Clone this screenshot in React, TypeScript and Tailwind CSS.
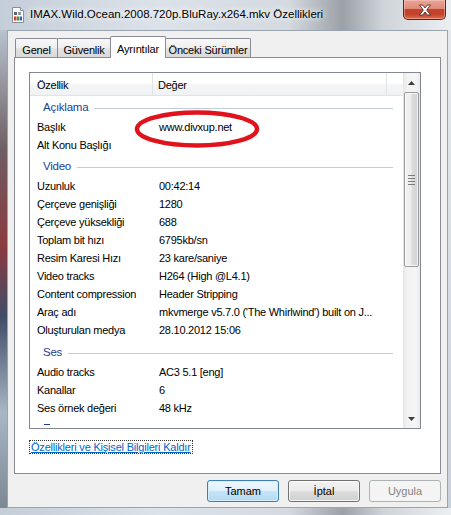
import React from "react";

type Row = { k: string; v: string };
type Group = { title: string; rows: Row[]; h: string };

const groups: Group[] = [
  {
    title: "Açıklama",
    h: "h-[22px] pt-[2px]",
    rows: [
      { k: "Başlık", v: "www.divxup.net" },
      { k: "Alt Konu Başlığı", v: "" },
    ],
  },
  {
    title: "Video",
    h: "h-[23px] pt-[3px]",
    rows: [
      { k: "Uzunluk", v: "00:42:14" },
      { k: "Çerçeve genişliği", v: "1280" },
      { k: "Çerçeve yüksekliği", v: "688" },
      { k: "Toplam bit hızı", v: "6795kb/sn" },
      { k: "Resim Karesi Hızı", v: "23 kare/saniye" },
      { k: "Video tracks", v: "H264 (High @L4.1)" },
      { k: "Content compression", v: "Header Stripping" },
      { k: "Araç adı", v: "mkvmerge v5.7.0 ('The Whirlwind') built on J..." },
      { k: "Oluşturulan medya", v: "28.10.2012 15:06" },
    ],
  },
  {
    title: "Ses",
    h: "h-[24px] pt-[4px]",
    rows: [
      { k: "Audio tracks", v: "AC3 5.1 [eng]" },
      { k: "Kanallar", v: "6" },
      { k: "Ses örnek değeri", v: "48 kHz" },
    ],
  },
];

function FileIcon() {
  return (
    <svg width="14" height="16" viewBox="0 0 14 16">
      <path d="M1.5 0.5h8l3 3v12h-11z" fill="#fbfbfb" stroke="#8a8f96" />
      <path d="M9.5 0.5v3h3" fill="#e4e6e9" stroke="#8a8f96" />
      <rect x="3" y="5" width="3" height="3" fill="#5b6470" />
      <rect x="7" y="5" width="3" height="3" fill="#8d96a3" />
      <rect x="3" y="9.5" width="2.5" height="4" fill="#d63a2a" />
      <rect x="6" y="9.5" width="2.5" height="4" fill="#3b9a3b" />
      <rect x="9" y="9.5" width="2" height="4" fill="#3a62c4" />
    </svg>
  );
}

function Tab({ label, w, selected }: { label: string; w: string; selected?: boolean }) {
  if (selected) {
    return (
      <div
        className={`${w} h-[22px] -mb-px -ml-px relative z-10 bg-white border border-b-0 border-[#898c95] rounded-t-[2px] flex justify-center pt-[4px] text-[11px] tracking-[-0.2px] text-black`}
      >
        {label}
      </div>
    );
  }
  return (
    <div
      className={`${w} h-[19px] -ml-px first:ml-0 border border-b-0 border-[#898c95] rounded-t-[2px] bg-[linear-gradient(180deg,#f8f8f8_0%,#eeeeee_50%,#e3e3e3_51%,#d9d9d9_100%)] flex justify-center pt-[3px] text-[11px] tracking-[-0.2px] text-black`}
    >
      {label}
    </div>
  );
}

export default function App() {
  return (
    <div className="relative w-[451px] h-[515px] overflow-hidden flex flex-col font-['Liberation_Sans',Arial,sans-serif] bg-[linear-gradient(90deg,#c4ced9_0%,#dce2e9_35%,#d4dae0_64%,#9ba1a7_76%,#cfd4d9_85%,#eceff2_100%)]">
      {/* title bar */}
      <div className="h-[30px] flex shrink-0">
        <div className="flex items-center h-[30px] pl-[11px] pb-[1px]">
          <FileIcon />
          <span className="ml-[5px] text-[11.5px] text-black [text-shadow:0_0_6px_#ffffff,0_0_10px_#ffffff]">
            IMAX.Wild.Ocean.2008.720p.BluRay.x264.mkv Özellikleri
          </span>
        </div>
        <div className="ml-auto mr-[5px] w-[43px] h-[20px] rounded-b-[5px] border border-t-0 border-[#5e2319] bg-[linear-gradient(180deg,#eaa596_0%,#de8a78_45%,#c8412b_50%,#c2432c_75%,#dc6e50_100%)] shadow-[inset_0_0_0_1px_rgba(255,210,200,0.45)] flex items-center justify-center">
          <svg width="14" height="12" viewBox="0 0 14 12">
            <path
              d="M1.5 1h3.2L7 4l2.3-3h3.2L8.7 6l3.8 5H9.3L7 8 4.7 11H1.5l3.8-5z"
              fill="#ffffff"
              stroke="#5a2a22"
              strokeWidth="0.9"
              strokeLinejoin="round"
            />
          </svg>
        </div>
      </div>

      {/* body */}
      <div className="flex h-[478px] shrink-0">
        <div className="w-[7px] bg-[linear-gradient(180deg,#b8c3ce_0%,#6d5e63_25%,#8b3b40_45%,#3f4c66_60%,#a9b6c4_80%,#7c8894_100%)]" />
        <div className="w-[441px] h-[478px] bg-[#f0f0f0] border border-[#9aa4ae] flex flex-col pl-[6px]">
          {/* tabs */}
          <div className="h-[26px] flex items-end pl-[1px] shrink-0">
            <Tab label="Genel" w="w-[43px]" />
            <Tab label="Güvenlik" w="w-[54px]" />
            <Tab label="Ayrıntılar" w="w-[56px]" selected />
            <Tab label="Önceki Sürümler" w="w-[86px]" />
          </div>

          {/* panel */}
          <div className="w-[427px] h-[417px] bg-white border border-[#898c95] pt-[14px] pl-[14px] shrink-0">
            <div className="w-[392px] h-[357px] border border-[#828790] flex bg-white">
              <div className="flex-1 overflow-hidden flex flex-col text-[11px] tracking-[-0.25px] text-black">
                {/* header */}
                <div className="h-[23px] shrink-0 flex border-b border-[#e2e3e5] bg-[linear-gradient(180deg,#ffffff_0%,#ffffff_45%,#f4f5f6_55%,#f1f2f4_100%)]">
                  <div className="w-[123px] pl-[7px] pt-[2px] flex items-center border-r border-[#e3e4e6]">Özellik</div>
                  <div className="w-[234px] pl-[5px] pt-[2px] flex items-center border-r border-[#e3e4e6]">Değer</div>
                  <div className="flex-1" />
                </div>
                {groups.map((g) => (
                  <div key={g.title} className="shrink-0">
                    <div className={`${g.h} w-[363px] flex items-center pl-[13px]`}>
                      <span className="text-[#1f3d93] text-[11.5px]">{g.title}</span>
                      <div className="flex-1 ml-[6px] h-px bg-[#c3cbdb]" />
                    </div>
                    {g.rows.map((r) => (
                      <div key={r.k} className="h-[18px] flex items-center">
                        <div className="w-[123px] pl-[7px] whitespace-nowrap">{r.k}</div>
                        <div className="pl-[6px] whitespace-nowrap">{r.v}</div>
                      </div>
                    ))}
                  </div>
                ))}
                <div className="mt-[7px] ml-[14px] w-[6px] h-px bg-[#1f3d93] shrink-0" />
              </div>
              {/* scrollbar */}
              <div className="w-[17px] shrink-0 flex flex-col bg-[linear-gradient(90deg,#e6e6e6_0%,#f3f3f3_25%,#f5f5f5_75%,#ebebeb_100%)]">
                <div className="h-[19px] flex items-center justify-center">
                  <svg width="7" height="4" viewBox="0 0 7 4">
                    <path d="M3.5 0L7 4H0z" fill="#3d3d3d" />
                  </svg>
                </div>
                <div className="h-[175px] mx-px rounded-[2px] border border-[#9a9a9a] bg-[linear-gradient(90deg,#f5f5f5_0%,#ececec_45%,#dcdcdc_55%,#d2d2d2_100%)] shadow-[inset_0_0_0_1px_rgba(255,255,255,0.7)] flex flex-col items-center justify-center gap-[2px]">
                  <div className="w-[7px] h-px bg-[#7d7d7d]" />
                  <div className="w-[7px] h-px bg-[#7d7d7d]" />
                  <div className="w-[7px] h-px bg-[#7d7d7d]" />
                  <div className="w-[7px] h-px bg-[#7d7d7d]" />
                </div>
                <div className="flex-1" />
                <div className="h-[19px] flex items-center justify-center">
                  <svg width="7" height="4" viewBox="0 0 7 4">
                    <path d="M0 0h7L3.5 4z" fill="#3d3d3d" />
                  </svg>
                </div>
              </div>
            </div>
            <div className="mt-[11px] inline-block border border-dotted border-[#333] px-px leading-[12px] text-[11px] tracking-[-0.2px] text-[#0066cc] underline">
              Özellikleri ve Kişisel Bilgileri Kaldır
            </div>
          </div>

          {/* buttons */}
          <div className="mt-[6px] flex justify-end gap-[9px] pr-[6px] text-[11px]">
            <div className="w-[72px] h-[22px] rounded-[3px] border border-[#3c7fb1] bg-[linear-gradient(180deg,#eef7fd_0%,#dff0fb_50%,#c6e4f7_51%,#b3d9f2_100%)] shadow-[inset_0_0_0_1px_#d5eefc] flex items-center justify-center text-black">
              Tamam
            </div>
            <div className="w-[72px] h-[22px] rounded-[3px] border border-[#707070] bg-[linear-gradient(180deg,#f2f2f2_0%,#ebebeb_50%,#dddddd_51%,#cfcfcf_100%)] shadow-[inset_0_0_0_1px_rgba(255,255,255,0.8)] flex items-center justify-center text-black">
              İptal
            </div>
            <div className="w-[72px] h-[22px] rounded-[3px] border border-[#adb2b5] bg-[#f4f4f4] flex items-center justify-center text-[#838383]">
              Uygula
            </div>
          </div>
        </div>
        <div className="flex-1 bg-[linear-gradient(180deg,#e6eaee_0%,#c9d1da_100%)]" />
      </div>

      {/* red hand-drawn ellipse */}
      <svg className="absolute left-[133px] top-[108px]" width="128" height="42" viewBox="0 0 128 42">
        <ellipse cx="64" cy="21" rx="60" ry="16.5" fill="none" stroke="#e0121c" strokeWidth="4.5" />
      </svg>
    </div>
  );
}
